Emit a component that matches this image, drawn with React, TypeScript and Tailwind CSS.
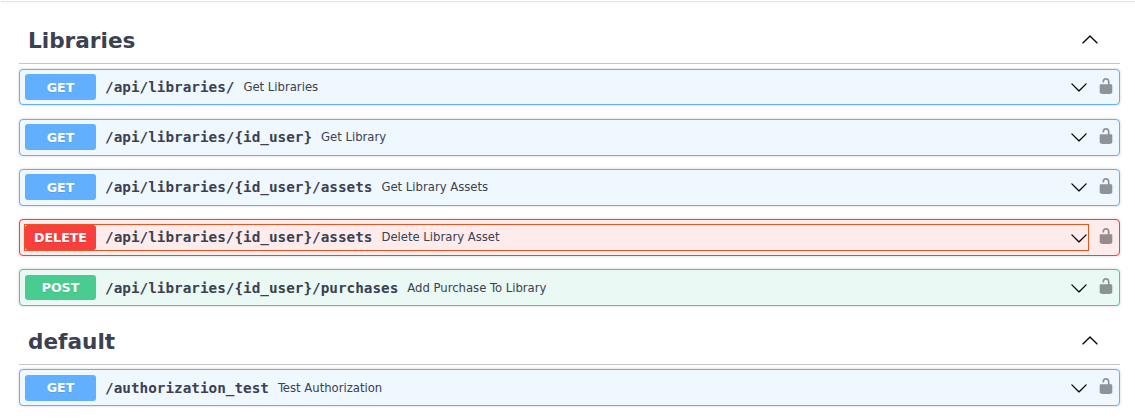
import React from 'react';

type Method = 'GET' | 'POST' | 'DELETE';

interface Operation {
  method: Method;
  path: string;
  summary: string;
  focused?: boolean;
  spacing: string;
  badge?: string;
  text?: string;
  summaryOffset?: string;
  arrow?: string;
}

const rowStyles: Record<Method, string> = {
  GET: 'border-[#61affe] bg-[#eff7ff]',
  POST: 'border-[#49cc90] bg-[#eaf9f3]',
  DELETE: 'border-[#f93e3e] bg-[#feebeb]',
};

const badgeStyles: Record<Method, string> = {
  GET: 'bg-[#61affe]',
  POST: 'bg-[#49cc90]',
  DELETE: 'bg-[#f93e3e]',
};

const libraries: Operation[] = [
  { method: 'GET', path: '/api/libraries/', summary: 'Get Libraries', spacing: 'mt-[5px] h-9' },
  { method: 'GET', path: '/api/libraries/{id_user}', summary: 'Get Library', spacing: 'mt-[14px] h-[37px]' },
  { method: 'GET', path: '/api/libraries/{id_user}/assets', summary: 'Get Library Assets', spacing: 'mt-[13px] h-[37px]' },
  { method: 'DELETE', path: '/api/libraries/{id_user}/assets', summary: 'Delete Library Asset', focused: true, spacing: 'mt-[13px] h-[37px]', badge: 'h-[25px] mt-[5px] leading-[26px]', arrow: 'mt-[9px]' },
  { method: 'POST', path: '/api/libraries/{id_user}/purchases', summary: 'Add Purchase To Library', spacing: 'mt-[13px] h-[37px]', badge: 'h-[25px] mt-[5px] leading-[26px]', text: 'pt-[3px]', summaryOffset: '-mt-px', arrow: 'mt-[9px]' },
];

const defaults: Operation[] = [
  { method: 'GET', path: '/authorization_test', summary: 'Test Authorization', spacing: 'mt-1 h-[37px]', badge: 'h-[26px] mt-[5px] leading-[26px]', text: 'pt-[3px]', summaryOffset: '-mt-px', arrow: 'mt-[9px]' },
];

function ArrowUp() {
  return (
    <svg viewBox="0 0 20 20" className="mb-[3px] h-[18px] w-[18px] shrink-0" fill="#000">
      <path d="M17.418 14.908c.272.268.709.268.979 0s.271-.701 0-.969l-7.908-7.83c-.27-.268-.707-.268-.979 0l-7.908 7.83c-.27.268-.27.701 0 .969.271.268.709.268.979 0L10 7.767l7.418 7.141z" />
    </svg>
  );
}

function ArrowDown() {
  return (
    <svg viewBox="0 0 20 20" className="h-[18px] w-[18px] shrink-0" fill="#000">
      <path d="M17.418 6.109c.272-.268.709-.268.979 0s.271.701 0 .969l-7.908 7.83c-.27.268-.707.268-.979 0l-7.908-7.83c-.27-.268-.27-.701 0-.969.271-.268.709-.268.979 0L10 13.25l7.418-7.141z" />
    </svg>
  );
}

function Unlocked() {
  return (
    <svg viewBox="0 0 20 20" className="h-[18px] w-[18px] shrink-0 opacity-40" fill="#000">
      <path d="M15.8 8H14V5.6C14 2.703 12.665 1 10 1 7.334 1 6 2.703 6 5.6V6h2v-.801C8 3.754 8.797 3 10 3c1.203 0 2 .754 2 2.199V8H4c-.553 0-1 .646-1 1.199V17c0 .549.428 1.139.951 1.307l1.197.387C5.672 18.861 6.55 19 7.1 19h5.8c.549 0 1.428-.139 1.951-.307l1.196-.387c.524-.167.953-.757.953-1.306V9.199C17 8.646 16.352 8 15.8 8z" />
    </svg>
  );
}

function OperationRow({ op }: { op: Operation }) {
  return (
    <div
      className={`${op.spacing} ${rowStyles[op.method]} relative flex items-start rounded-[4px] border pl-[5px] pr-1 shadow-[0_0_3px_rgba(0,0,0,0.19)]`}
    >
      <div className={`${op.badge ?? 'mt-1 h-[26px] leading-[28px]'} ${badgeStyles[op.method]} w-[71px] shrink-0 rounded-[3px] text-center text-[12.6px] font-bold text-white [text-shadow:0_1px_0_rgba(0,0,0,0.1)]`}>
        {op.method}
      </div>
      <div className={`${op.text ?? 'pt-[2px]'} flex h-[34px] grow items-center pl-[9px]`}>
        <span className="whitespace-nowrap font-['DejaVu_Sans_Mono',monospace] text-[14.33px] font-bold">{op.path}</span>
        <span className={`${op.summaryOffset ?? '-mt-[3px]'} whitespace-nowrap pl-[9px] text-[12.95px] [font-stretch:condensed] font-['DejaVu_Sans_Condensed','DejaVu_Sans',sans-serif]`}>{op.summary}</span>
      </div>
      <div className={op.arrow ?? 'mt-2'}><ArrowDown /></div>
      <div className="ml-[9px] mt-[7px]"><Unlocked /></div>
      {op.focused && (
        <div className="pointer-events-none absolute left-1 top-1 h-[27px] w-[1065px] border border-[#e95420]" />
      )}
    </div>
  );
}

function Section({ title, operations, heading }: { title: string; operations: Operation[]; heading: string }) {
  return (
    <section>
      <div className={`${heading} flex items-center justify-between border-b border-[#c4c6ca] pl-[9px] pr-[21px]`}>
        <h3 className="text-[21.6px] font-bold leading-7">{title}</h3>
        <ArrowUp />
      </div>
      {operations.map((op) => (
        <div key={op.method + op.path} className="flow-root">
          <OperationRow op={op} />
        </div>
      ))}
    </section>
  );
}

export default function App() {
  return (
    <div className="h-[420px] overflow-hidden bg-white font-['DejaVu_Sans',sans-serif] text-[#3b4151]">
      <div className="ml-px mt-px h-[3px] border-t border-t-[#e2e2e2] bg-[#fbfbfb]" />
      <main className="-mt-[3px] pl-[19px] pr-[15px]">
        <Section title="Libraries" operations={libraries} heading="h-[63px] pt-[17px]" />
        <Section title="default" operations={defaults} heading="h-[59px] pt-[13px]" />
      </main>
    </div>
  );
}
